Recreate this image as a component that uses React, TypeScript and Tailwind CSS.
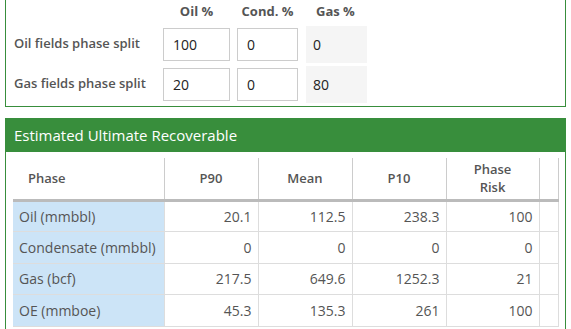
const rows = [
  { phase: 'Oil (mmbbl)', p90: '20.1', mean: '112.5', p10: '238.3', risk: '100' },
  { phase: 'Condensate (mmbbl)', p90: '0', mean: '0', p10: '0', risk: '0' },
  { phase: 'Gas (bcf)', p90: '217.5', mean: '649.6', p10: '1252.3', risk: '21' },
  { phase: 'OE (mmboe)', p90: '45.3', mean: '135.3', p10: '261', risk: '100' },
];

function SplitRow({ label, oil, cond, gas }: { label: string; oil: string; cond: string; gas: string }) {
  return (
    <div className="flex h-[40px] items-center">
      <div className="w-[157px] pl-[8px] font-semibold text-[#555]">{label}</div>
      <input
        readOnly
        value={oil}
        className="h-[33px] w-[67px] border border-[#ccc] bg-white pl-[9px] text-[14px] text-[#222] outline-none"
      />
      <input
        readOnly
        value={cond}
        className="ml-[7px] h-[33px] w-[61px] border border-[#ccc] bg-white pl-[9px] text-[14px] text-[#222] outline-none"
      />
      <div className="ml-[8px] flex h-[37px] w-[61px] items-center bg-[#f5f5f5] pl-[7px] text-[14px] text-[#222]">
        {gas}
      </div>
    </div>
  );
}

export default function App() {
  return (
    <div className="h-[329px] w-[571px] overflow-hidden bg-white font-['Open_Sans',sans-serif] text-[13px]">
      {/* phase split panel, top edge cut off */}
      <div className="mx-[5px] h-[107px] border-x border-b border-[#388e3c]">
        <div className="flex h-[24px] items-center font-bold text-[#555]">
          <div className="w-[157px]" />
          <div className="w-[67px] text-center">Oil %</div>
          <div className="ml-[7px] w-[61px] text-center">Cond. %</div>
          <div className="ml-[8px] w-[61px] pl-[10px]">Gas %</div>
        </div>
        <SplitRow label="Oil fields phase split" oil="100" cond="0" gas="0" />
        <SplitRow label="Gas fields phase split" oil="20" cond="0" gas="80" />
      </div>

      {/* EUR panel */}
      <div className="mx-[5px] mt-[11px]">
        <div className="flex h-[34px] items-center bg-[#388e3c] px-[9px] text-[15px] text-white">
          Estimated Ultimate Recoverable
        </div>
        <div className="h-[200px] border-x border-[#388e3c] pl-[7px] pt-[6px]">
          <table className="w-[545px] table-fixed border-collapse text-[#555]">
            <colgroup>
              <col className="w-[151px]" />
              <col className="w-[94px]" />
              <col className="w-[94px]" />
              <col className="w-[94px]" />
              <col className="w-[93px]" />
              <col className="w-[19px]" />
            </colgroup>
            <thead>
              <tr className="h-[42px] border-b-[3px] border-[#bbb]">
                <th className="border-r border-[#ccc] pl-[15px] text-left font-semibold">Phase</th>
                <th className="border-r border-[#ccc] text-center font-semibold">P90</th>
                <th className="border-r border-[#ccc] text-center font-semibold">Mean</th>
                <th className="border-r border-[#ccc] text-center font-semibold">P10</th>
                <th className="border-r border-[#ccc] text-center font-semibold leading-[18px]">
                  Phase
                  <br />
                  Risk
                </th>
                <th className="border-r border-[#ccc]" />
              </tr>
            </thead>
            <tbody className="text-[14px]">
              {rows.map((r) => (
                <tr key={r.phase} className="h-[31.5px] border-b border-[#ddd]">
                  <td className="border-r border-[#ddd] bg-[#cce4f7] pl-[6px]">{r.phase}</td>
                  <td className="border-r border-[#ddd] pr-[6px] text-right">{r.p90}</td>
                  <td className="border-r border-[#ddd] pr-[6px] text-right">{r.mean}</td>
                  <td className="border-r border-[#ddd] pr-[6px] text-right">{r.p10}</td>
                  <td className="border-r border-[#ddd] pr-[6px] text-right">{r.risk}</td>
                  <td className="border-r border-[#ddd]" />
                </tr>
              ))}
            </tbody>
          </table>
        </div>
      </div>
    </div>
  );
}
